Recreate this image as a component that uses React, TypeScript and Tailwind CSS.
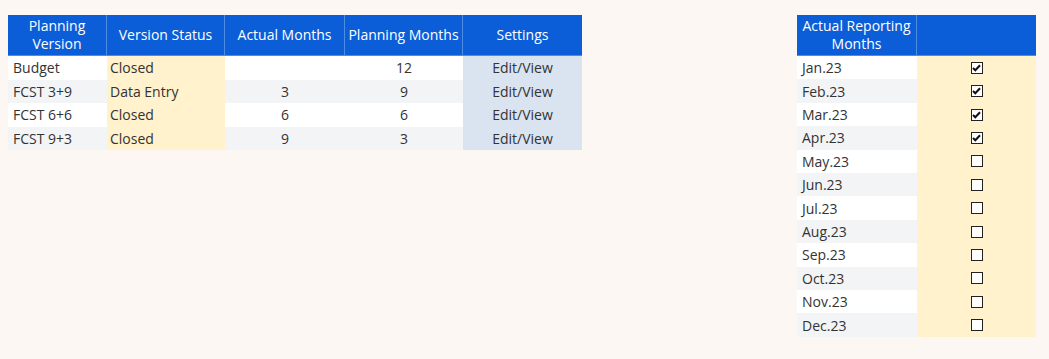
const versions = [
  { name: 'Budget', status: 'Closed', actual: '', planning: '12' },
  { name: 'FCST 3+9', status: 'Data Entry', actual: '3', planning: '9' },
  { name: 'FCST 6+6', status: 'Closed', actual: '6', planning: '6' },
  { name: 'FCST 9+3', status: 'Closed', actual: '9', planning: '3' },
];

const months = [
  'Jan.23', 'Feb.23', 'Mar.23', 'Apr.23', 'May.23', 'Jun.23',
  'Jul.23', 'Aug.23', 'Sep.23', 'Oct.23', 'Nov.23', 'Dec.23',
];
const checkedCount = 4;

function Box({ checked }: { checked: boolean }) {
  return (
    <div className="w-[12px] h-[12px] border border-[#222] bg-white flex items-center justify-center">
      {checked && (
        <svg width="9" height="8" viewBox="0 0 9 8">
          <path d="M1 4 L3.3 6.3 L8 1.2" fill="none" stroke="#111" strokeWidth="2" />
        </svg>
      )}
    </div>
  );
}

export default function App() {
  return (
    <div className="min-h-screen bg-[#fdf7f4] text-[#333] text-[14px] font-['Open_Sans',sans-serif] pt-[15px] pl-[8px] flex items-start">
      {/* versions table */}
      <div className="w-[574px]">
        <div className="flex h-[41px] bg-[#0b5ed7] text-white border-b border-[#4f8de4] leading-[18px]">
          <div className="w-[99px] flex items-center justify-center text-center border-r border-[#4f8de4]">Planning<br />Version</div>
          <div className="w-[118px] flex items-center justify-center border-r border-[#4f8de4]">Version Status</div>
          <div className="w-[120px] flex items-center justify-center border-r border-[#4f8de4]">Actual Months</div>
          <div className="w-[118px] flex items-center justify-center border-r border-[#4f8de4]">Planning Months</div>
          <div className="flex-1 flex items-center justify-center">Settings</div>
        </div>
        {versions.map((v, i) => (
          <div key={v.name} className={`flex h-[23.5px] items-stretch ${i % 2 ? 'bg-[#f3f4f6]' : 'bg-white'}`}>
            <div className="w-[99px] pl-[5px] flex items-center">{v.name}</div>
            <div className="w-[118px] pl-[3px] flex items-center bg-[#fff2cc]">{v.status}</div>
            <div className="w-[120px] flex items-center justify-center">{v.actual}</div>
            <div className="w-[118px] flex items-center justify-center">{v.planning}</div>
            <div className="flex-1 flex items-center justify-center bg-[#dae3f0]">Edit/View</div>
          </div>
        ))}
      </div>

      {/* reporting months */}
      <div className="w-[239px] ml-[215px]">
        <div className="flex h-[41px] bg-[#0b5ed7] text-white border-b border-[#4f8de4] leading-[18px]">
          <div className="w-[120px] flex items-center justify-center text-center border-r border-[#4f8de4]">Actual Reporting<br />Months</div>
          <div className="flex-1" />
        </div>
        {months.map((m, i) => (
          <div key={m} className={`flex h-[23.42px] ${i % 2 ? 'bg-[#f3f4f6]' : 'bg-white'}`}>
            <div className="w-[120px] pl-[5px] flex items-center">{m}</div>
            <div className="flex-1 flex items-center justify-center bg-[#fff2cc]">
              <Box checked={i < checkedCount} />
            </div>
          </div>
        ))}
      </div>
    </div>
  );
}
